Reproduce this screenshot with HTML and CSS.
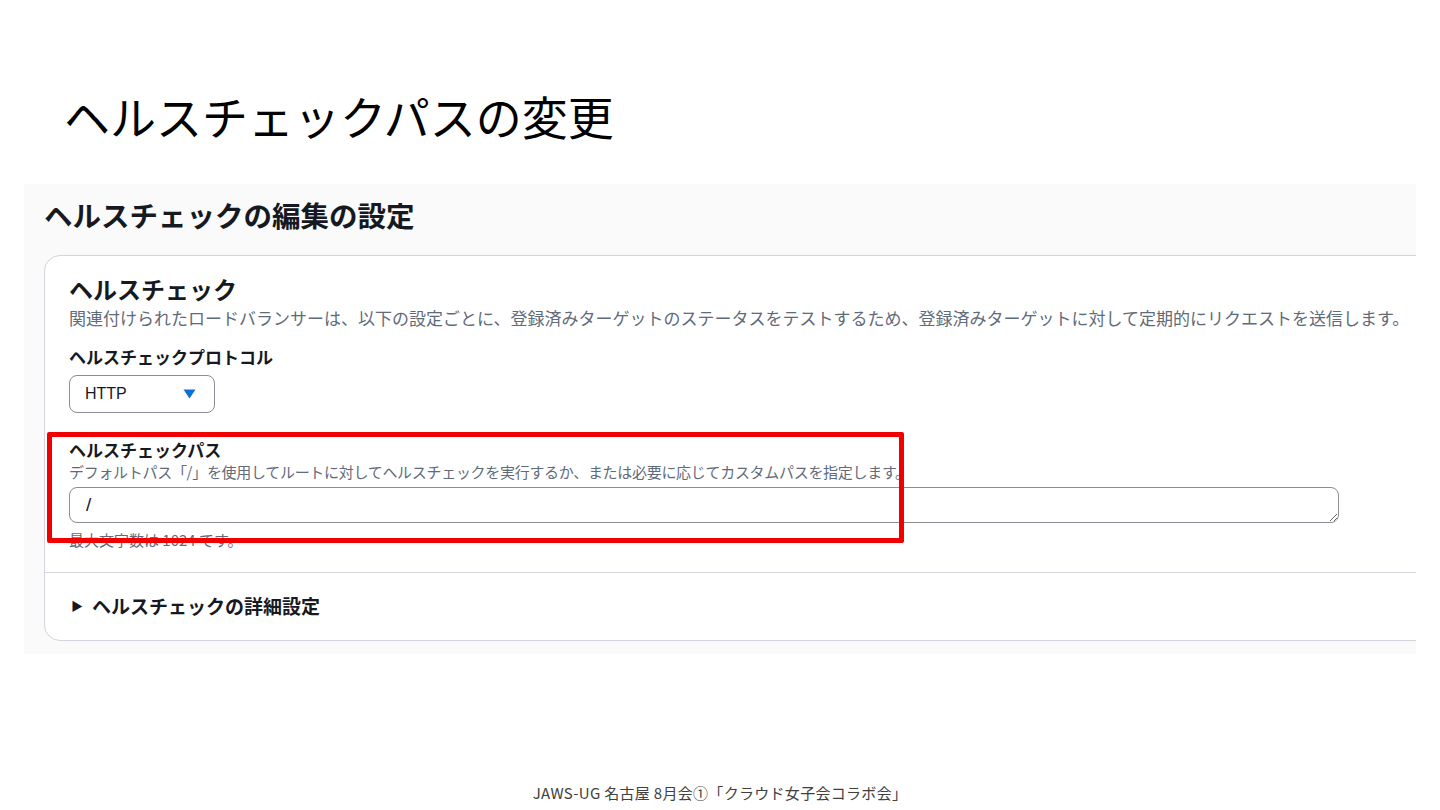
FILE: index.html
```html
<!DOCTYPE html>
<html lang="ja">
<head>
<meta charset="utf-8">
<link rel="stylesheet" href="styles.css">
</head>
<body>
<div class="slide">
  <h1 class="title">ヘルスチェックパスの変更</h1>
  <div class="panel">
    <h2 class="panel-heading">ヘルスチェックの編集の設定</h2>
    <div class="card">
      <div class="card-body">
        <h3 class="card-title">ヘルスチェック</h3>
        <p class="card-desc">関連付けられたロードバランサーは、以下の設定ごとに、登録済みターゲットのステータスをテストするため、登録済みターゲットに対して定期的にリクエストを送信します。</p>
        <div class="field-label">ヘルスチェックプロトコル</div>
        <div class="select">
          <span class="select-value">HTTP</span>
          <svg class="select-caret" width="13" height="10" viewBox="0 0 13 10"><path d="M0.5 0.5 L12.5 0.5 L6.5 9.5 Z" fill="#0972d3"/></svg>
        </div>
        <div class="field-label path-label">ヘルスチェックパス</div>
        <div class="field-desc">デフォルトパス「/」を使用してルートに対してヘルスチェックを実行するか、または必要に応じてカスタムパスを指定します。</div>
        <textarea class="path-input" rows="1">/</textarea>
        <div class="field-hint">最大文字数は 1024 です。</div>
      </div>
      <div class="card-expander">
        <span class="expander-caret">▶</span>
        <span class="expander-text">ヘルスチェックの詳細設定</span>
      </div>
    </div>
  </div>
  <div class="highlight"></div>
  <div class="footer">JAWS-UG 名古屋 8月会①「クラウド女子会コラボ会」</div>
</div>
</body>
</html>
```

FILE: styles.css
```css
* { box-sizing: border-box; }
html, body {
  margin: 0;
  padding: 0;
  background: #ffffff;
}
body {
  font-family: "Noto Sans CJK JP", "Noto Sans", sans-serif;
  color: #16191f;
}
.slide {
  position: relative;
  width: 1440px;
  height: 810px;
  overflow: hidden;
}
.title {
  margin: 0;
  padding: 87px 0 0 64px;
  font-size: 46px;
  line-height: 56px;
  font-weight: 400;
  color: #000000;
  letter-spacing: 0;
}
.panel {
  margin: 41px 0 0 24px;
  width: 1392px;
  height: 470px;
  background: #fafafa;
  overflow: hidden;
  padding: 13px 0 0 20px;
}
.panel-heading {
  margin: 0 0 22px 0;
  font-size: 28.5px;
  line-height: 36px;
  font-weight: 700;
  letter-spacing: 0;
  color: #16191f;
}
.card {
  width: 1420px;
  background: #ffffff;
  border: 1px solid #d1d5db;
  border-radius: 16px;
}
.card-body {
  padding: 18px 24px 22px 24px;
  border-bottom: 1px solid #d5d9dd;
}
.card-title {
  margin: 0;
  font-size: 24px;
  line-height: 30px;
  font-weight: 700;
}
.card-desc {
  margin: 2px 0 0 0;
  font-size: 17px;
  line-height: 24px;
  color: #5f6b7a;
  white-space: nowrap;
}
.field-label {
  margin-top: 15px;
  font-size: 17px;
  line-height: 24px;
  font-weight: 700;
}
.select {
  margin-top: 6px;
  width: 146px;
  height: 38px;
  border: 1px solid #8c8c94;
  border-radius: 8px;
  display: flex;
  align-items: center;
  justify-content: space-between;
  padding: 0 18px 0 15px;
}
.select-value {
  font-family: "Liberation Sans", Arial, sans-serif;
  font-size: 16px;
  color: #16191f;
}
.path-label {
  margin-top: 25px;
}
.field-desc {
  font-size: 15px;
  line-height: 20px;
  color: #5f6b7a;
  letter-spacing: -0.3px;
  white-space: nowrap;
}
.path-input {
  display: block;
  margin-top: 5px;
  width: 1270px;
  height: 36px;
  border: 1px solid #8c8c94;
  border-radius: 8px;
  padding: 5px 16px;
  font-family: "Liberation Sans", Arial, sans-serif;
  font-size: 19px;
  line-height: 24px;
  color: #16191f;
  background: #ffffff;
  resize: vertical;
  overflow: hidden;
}
.field-hint {
  margin-top: 7px;
  font-size: 15px;
  line-height: 20px;
  color: #5f6b7a;
}
.card-expander {
  padding: 20px 24px 21px 26px;
  display: flex;
  align-items: center;
  gap: 9px;
  font-size: 19px;
  line-height: 26px;
  font-weight: 700;
}
.expander-caret {
  font-size: 12px;
  color: #16191f;
}
.highlight {
  position: absolute;
  left: 47px;
  top: 432px;
  width: 857px;
  height: 111px;
  border: 5px solid #f00000;
  border-radius: 2px;
}
.footer {
  margin-top: 129px;
  text-align: center;
  font-size: 15px;
  line-height: 20px;
  color: #404040;
  letter-spacing: 0.3px;
}
```
